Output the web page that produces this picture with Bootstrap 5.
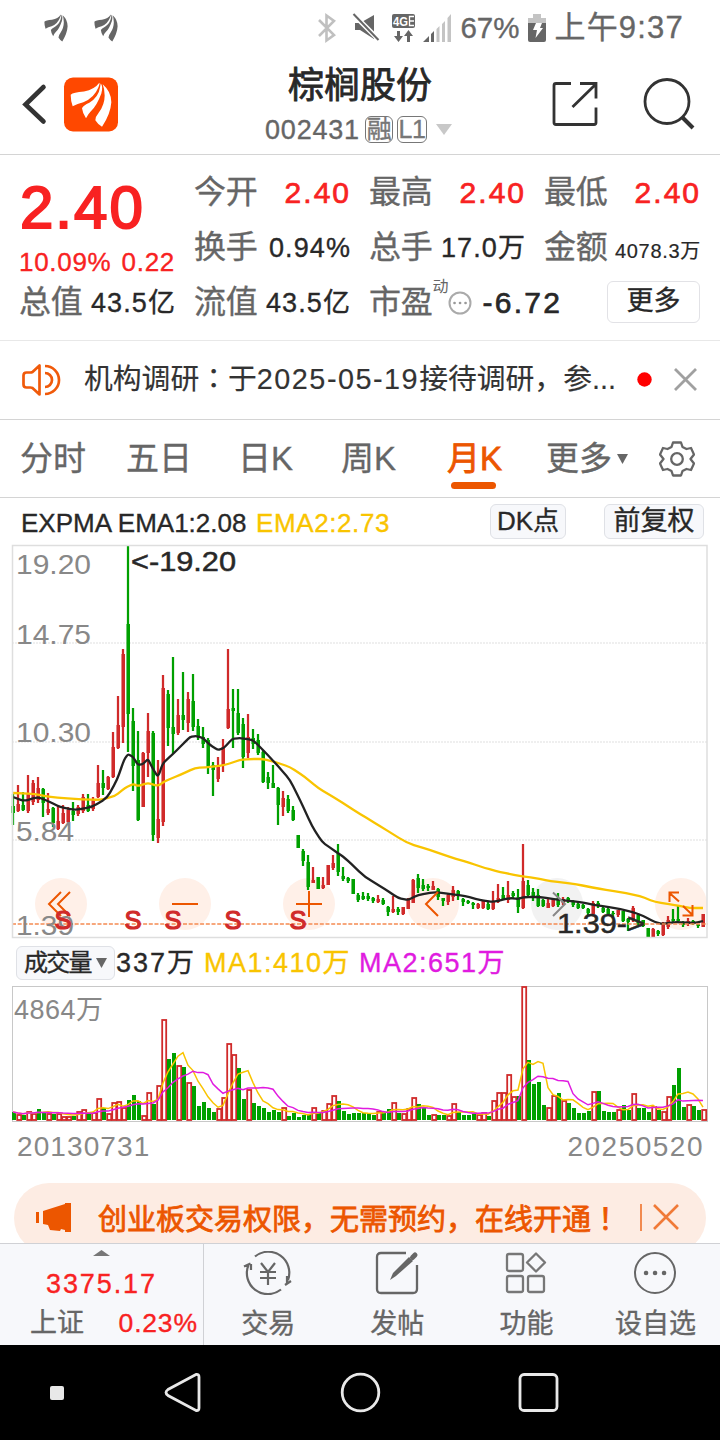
<!DOCTYPE html>
<html lang="zh-CN">
<head>
<meta charset="utf-8">
<meta name="viewport" content="width=device-width, initial-scale=1">
<title>棕榈股份 002431</title>
<link href="https://cdn.jsdelivr.net/npm/bootstrap@5.3.0/dist/css/bootstrap.min.css" rel="stylesheet">
<style>
:root{--ink:#282828;--ash:#666;--up:#f82222;--brand:#ec5600;--line:#d4d4d4}
body{width:720px;height:1440px;overflow:hidden;background:#fff;color:var(--ink);font-family:"Liberation Sans","Noto Sans CJK SC",sans-serif;line-height:1;-webkit-text-stroke:.35px currentColor}
svg{display:block;flex:none}
.nw{white-space:nowrap}
.mid-punct{font-family:"Noto Sans CJK TC",sans-serif}
.statusbar{height:55px;color:var(--ash)}
.titlebar{height:100px;border-bottom:1px solid var(--line)}
.tagbox{border:1.5px solid #777;border-radius:6px;height:27px;font-size:25px;line-height:25px;letter-spacing:-.5px}
.quote{height:186px;padding:9px 20px 0 19px;border-bottom:1px solid #e8e8e8;display:grid;grid-template-columns:repeat(4,1fr);grid-template-rows:repeat(3,55px);column-gap:19px}
.price-cell{grid-row:span 2}
.price{font-size:60px;letter-spacing:2px;font-weight:400;-webkit-text-stroke:2px currentColor}
.lbl{font-size:32px;color:var(--ash);letter-spacing:-.3px}
.val{font-size:27px;letter-spacing:1.1px;margin-right:-1px;padding-top:3px}
.val-lg{font-size:30px;letter-spacing:2px;-webkit-text-stroke:.7px currentColor}
.val-sm{font-size:20px;letter-spacing:.7px;padding-top:9px;-webkit-text-stroke:.2px currentColor}
.up{color:var(--up)}
.more-btn{width:93px;height:42px;border:1.5px solid #e2e2e6;border-radius:6px;font-size:27px;background:#fff}
.news{height:79px;border-bottom:1px solid var(--line);padding-left:21px}
.news-text{font-size:28.8px;color:#333;-webkit-text-stroke:.15px currentColor}
.news-text i{font-style:normal;letter-spacing:1.5px}
.tabs{height:78px;border-bottom:1px solid var(--line);padding-left:20px;font-size:33px;color:var(--ash)}
.tabs .on{color:var(--brand);-webkit-text-stroke:.8px currentColor}
.tabs .on::after{content:"";position:absolute;left:4px;bottom:-12px;width:45px;height:7px;border-radius:4px;background:var(--brand)}
.ind{height:47px;font-size:26px}
.chip{background:#f7f8fb;border:1.5px solid #dfe1e6;border-radius:6px}
.gold{color:#f9c400}.mag{color:#e01be0}
.volhead{height:48px;font-size:27px;padding-left:16px}
.dates{height:50px;padding:0 17px;font-size:28px;color:#888;letter-spacing:1.1px;-webkit-text-stroke:0}
.promo-wrap{height:71px;padding:11px 14px 0;overflow:hidden}
.promo{height:70px;border-radius:35px;background:#fdece3;color:var(--brand)}
.dock{height:102px;background:#f7f8fb;border-top:1px solid #d0d1d5;color:var(--ash)}
.idx{width:204px;border-right:1px solid #d0d1d5}
.dock-item{width:129.25px;font-size:27px}
.sysnav{height:95px;background:#000}
svg text{font-family:"Liberation Sans","Noto Sans CJK SC",sans-serif}
</style>
</head>
<body>
<svg width="0" height="0" class="position-absolute"><defs><g id="feather">
<path d="M20 52Q28 44 60 42Q92 36 106 16Q108 18 103 30Q90 62 58 74Q40 78 26 86Q20 70 20 52Z"/>
<path d="M110 18Q118 26 112 48Q98 86 80 102Q72 110 66 122Q56 108 54 92Q58 84 76 76Q104 58 108 30Z"/>
<path d="M116 20Q142 42 142 74Q140 108 114 148Q100 138 94 128Q94 118 104 106Q122 82 122 54Q122 34 116 20Z"/></g></defs></svg>

<div class="statusbar d-flex align-items-center nw">
  <svg width="24" height="28" viewBox="18 14 126 136" preserveAspectRatio="none" fill="#666" style="margin-left:44px"><use href="#feather"/></svg>
  <svg width="24" height="28" viewBox="18 14 126 136" preserveAspectRatio="none" fill="#666" style="margin-left:26px"><use href="#feather"/></svg>
  <svg class="ms-auto" width="145" height="34" viewBox="316 10 145 34">
    <path d="M320 19L335 34L327.500 39.500V14.500L335 20L320 35" fill="none" stroke="#c0c0c0" stroke-width="2.600"/>
    <path d="M356 22h5l14-8v24l-14-9h-5z" fill="#666"/><path d="M354 13l26 26" stroke="#fff" stroke-width="5"/><path d="M354.500 13l25 26" stroke="#666" stroke-width="2"/>
    <rect x="393" y="13" width="23" height="14" rx="2" fill="#666"/><text x="394" y="24.500" font-size="12" font-weight="700" fill="#fff" textLength="15" lengthAdjust="spacingAndGlyphs">4G</text><path d="M415 15.500h-4.500v9h4.500M410.500 20h4.500" stroke="#fff" stroke-width="1.300" fill="none"/>
    <path d="M398 30h3v5h3l-4.500 6l-4.500-6h3zM408 41h3v-6h3l-4.500-6l-4.500 6h3z" fill="#666"/>
    <path d="M424 41L430 35V41z M432 33l3-3v11h-3z" fill="#666"/><path d="M437.500 28l3-3v16h-3zM443 23l3-3v21h-3zM448.500 17l3.500-4v28h-3.500z" fill="#c4c4c4"/>
  </svg>
  <span style="font-size:29.500px;letter-spacing:0">67%</span>
  <svg width="18" height="28" viewBox="0 0 18 28" style="margin-left:9px"><path d="M0 4h5V0h8v4h5v6H0z" fill="#c4c4c4"/><path d="M0 9h18v17q0 2-2 2H2q-2 0-2-2z" fill="#666"/><path d="M8 9h6l-2 5h3L7.500 24l1.500-8H5z" fill="#fff"/></svg>
  <span style="font-size:31px;margin:0 36px 0 8px;letter-spacing:1.200px">上午9:37</span>
</div>

<header class="titlebar d-flex">
  <svg width="180" height="99" viewBox="0 55 180 99"><path d="M43.500 87L25.500 104.500L43.500 121.500" fill="none" stroke="#333" stroke-width="4.600" stroke-linecap="round"/><rect x="64" y="77.500" width="54" height="54" rx="9" fill="#ff4800"/><svg x="64" y="77.500" width="54" height="54" viewBox="0 0 162 162" fill="#fff"><use href="#feather"/></svg></svg>
  <div class="flex-grow-1 d-flex flex-column align-items-center nw">
    <div style="font-size:36px;line-height:40px;margin-top:11px;-webkit-text-stroke:.8px">棕榈股份</div>
    <div class="d-flex align-items-center" style="height:28px;margin-top:9px;margin-right:3px">
      <span style="font-size:27px;color:#666;letter-spacing:.8px;padding-top:2px;width:100px">002431</span>
      <span class="tagbox text-center" style="width:28px;color:#777">融</span><span class="tagbox text-center" style="width:30px;margin-left:4px;color:#777">L1</span>
      <svg width="16" height="11" viewBox="0 0 16 11" style="margin-left:9px"><path d="M0 0h16L8 11z" fill="#c8c8c8"/></svg>
    </div>
  </div>
  <svg width="180" height="99" viewBox="540 55 180 99"><g fill="none" stroke="#333" stroke-width="2.800"><path d="M571 83.500h-15q-2 0-2 2v37q0 2 2 2h38q2 0 2-2v-15M580 83.500h16v15M596 84L572.500 107"/><circle cx="667" cy="101.500" r="22"/><path d="M682.500 117.500l10.500 10.500" stroke-width="4"/></g></svg>
</header>

<section class="quote nw">
  <div class="price-cell up">
    <div class="price" style="margin-top:14px;margin-left:1px">2.40</div>
    <div class="d-flex justify-content-between" style="font-size:26px;margin:11px 0 0 0;letter-spacing:.7px"><span>10.09%</span><span>0.22</span></div>
  </div>
  <div class="d-flex justify-content-between align-items-center"><span class="lbl">今开</span><span class="val val-lg up">2.40</span></div>
  <div class="d-flex justify-content-between align-items-center"><span class="lbl">最高</span><span class="val val-lg up">2.40</span></div>
  <div class="d-flex justify-content-between align-items-center"><span class="lbl">最低</span><span class="val val-lg up">2.40</span></div>
  <div class="d-flex justify-content-between align-items-center"><span class="lbl">换手</span><span class="val">0.94%</span></div>
  <div class="d-flex justify-content-between align-items-center"><span class="lbl">总手</span><span class="val">17.0万</span></div>
  <div class="d-flex justify-content-between align-items-center"><span class="lbl">金额</span><span class="val val-sm">4078.3万</span></div>
  <div class="d-flex justify-content-between align-items-center"><span class="lbl">总值</span><span class="val">43.5亿</span></div>
  <div class="d-flex justify-content-between align-items-center"><span class="lbl">流值</span><span class="val">43.5亿</span></div>
  <div class="d-flex align-items-center" style="grid-column:span 2"><span class="lbl">市盈</span><span class="align-self-start" style="font-size:16px;color:#666;padding-top:5px;-webkit-text-stroke:0">动</span>
    <svg width="24" height="24" viewBox="0 0 24 24" style="margin-top:2px"><circle cx="12" cy="12" r="10.500" fill="none" stroke="#aaa" stroke-width="2"/><path d="M6.500 12h.1M12 12h.1M17.500 12h.1" stroke="#999" stroke-width="2.600" stroke-linecap="round"/></svg>
    <span class="val val-lg" style="margin-left:10px;letter-spacing:2.300px">-6.72</span><span class="more-btn ms-auto d-flex align-items-center justify-content-center">更多</span></div>
</section>

<section class="news d-flex align-items-center nw">
  <svg width="40" height="32" viewBox="0 0 40 32" fill="none" stroke="#f05a0a" stroke-width="2.700" stroke-linejoin="round"><path d="M18.500 1.500v29l-7-6.500q-1-.5-2-.5h-4q-3 0-3-3v-9q0-3 3-3h4q1 0 2-.5zM24 2a14 14 0 0 1 0 28M24 9a7 7 0 0 1 0 14"/></svg>
  <span class="news-text" style="margin:-3px 0 0 23px;width:535px">机构调研<span class="mid-punct" lang="zh-TW">：</span>于<i>2025-05-19</i>接待调研，参...</span>
  <svg width="15" height="15" style="margin:-1px 0 0 18px"><circle cx="7.500" cy="7.500" r="7.200" fill="red"/></svg>
  <svg width="23" height="23" style="margin:-1px 0 0 22px"><path d="M1 1l21 21M22 1L1 22" stroke="#a0a0a0" stroke-width="2.800"/></svg>
</section>

<nav class="tabs d-flex align-items-center nw">
  <span style="width:106px">分时</span><span style="width:112px">五日</span><span style="width:103px">日K</span><span style="width:106px">周K</span><span style="width:99px"><b class="on position-relative fw-normal">月K</b></span>
  <span class="d-flex align-items-center" style="width:113px">更多<svg width="12" height="10" style="margin-left:5px"><path d="M0 0h11L5.500 10z" fill="#666"/></svg></span>
  <svg width="36" height="36" viewBox="-18 -18 36 36" fill="none" stroke="#666" stroke-width="2.300"><path d="M-4-16.500H4L5.500-12L9.500-10L14-11L17-4.500L13.500 0L17 4.500L14 11L9.500 10L5.500 12L4 16.500H-4L-5.500 12L-9.500 10L-14 11L-17 4.500L-13.500 0L-17-4.500L-14-11L-9.500-10L-5.500-12Z" stroke-linejoin="round"/><circle r="5.800"/></svg>
</nav>

<div class="ind d-flex align-items-center nw">
  <span style="margin:2px 0 0 21px;width:235px">EXPMA EMA1:2.08</span><span class="gold" style="width:234px;letter-spacing:.6px;margin-top:2px">EMA2:2.73</span>
  <span class="chip d-flex align-items-center justify-content-center" style="width:76px;height:35px;margin-bottom:1px">DK点</span>
  <span class="chip d-flex align-items-center justify-content-center" style="width:100px;height:35px;margin:0 0 1px 38px;font-size:27px">前复权</span>
</div>

<svg id="kline" width="696" height="393" viewBox="12 545 696 393" style="margin-left:12px" overflow="visible"></svg>

<div class="volhead d-flex align-items-center nw">
  <span class="chip d-flex align-items-center" style="width:99px;height:34px;padding-left:7px;font-size:24px;letter-spacing:-1.800px;margin-top:1px">成交量<svg width="11" height="10" style="margin-left:5px"><path d="M0 0h11L5.500 10z" fill="#666"/></svg></span>
  <span style="margin:2px 0 0 1px;width:88px;letter-spacing:2px">337万</span><span class="gold" style="width:155px;letter-spacing:1.500px;margin-top:2px">MA1:410万</span><span class="mag" style="letter-spacing:1.500px;margin-top:2px">MA2:651万</span>
</div>

<svg id="volume" width="696" height="136" viewBox="12 986 696 136" style="margin-left:12px"></svg>

<div class="dates d-flex justify-content-between align-items-center"><span>20130731</span><span style="margin-right:-1px;letter-spacing:1.500px">20250520</span></div>

<div class="promo-wrap"><div class="promo d-flex nw" style="padding-left:22px">
  <svg width="37" height="30" viewBox="0 0 37 30" fill="#ec5600" style="margin-top:19px"><path d="M0 10h3v11H0zM7 9L29 2V1h6v29h-6v-2l-4-1l-1 2l-10-1l-2-5l-5-1z"/></svg>
  <span style="font-size:29px;line-height:32px;margin:18px 0 0 25px;width:542px;-webkit-text-stroke:.8px">创业板交易权限，无需预约，在线开通<span class="mid-punct" lang="zh-TW">！</span></span>
  <svg width="40" height="30" viewBox="0 0 40 30" style="margin-top:19px"><path d="M1 2v27" stroke="#ec5600" stroke-width="1.300"/><path d="M14 3l24 24M38 3L14 27" stroke="#f07a38" stroke-width="2.600"/></svg>
</div></div>

<div class="dock d-flex nw">
  <div class="idx up" style="padding:6px 6px 0 30px"><svg width="17" height="6" style="margin-left:63px"><path d="M0 6h17L8.500 0z" fill="#777"/></svg>
    <div style="font-size:27px;letter-spacing:1.900px;margin:15px 0 0 16px">3375.17</div>
    <div class="d-flex justify-content-between align-items-center" style="font-size:27px;margin-top:12px"><span style="color:#666">上证</span><span style="font-size:26.500px;letter-spacing:.800px;margin-right:-1px">0.23%</span></div></div>
  <div class="dock-item d-flex flex-column align-items-center"><svg width="50" height="44" viewBox="0 0 50 44" style="margin-top:7px" fill="none" stroke="#666" stroke-width="2.200"><path d="M12 5.500A21 21 0 0 1 45 29M38 38.500A21 21 0 0 1 5.500 14M1 15.500l6.500-3M8 13v6M42 34l6-4M44 32v-7M18 12l7 9l7-9M25 21v13M17 21h16M17 27h16"/></svg><span style="margin-top:16px">交易</span></div>
  <div class="dock-item d-flex flex-column align-items-center"><svg width="44" height="44" viewBox="0 0 44 44" style="margin-top:7px" fill="none" stroke="#666" stroke-width="2.300"><path d="M31 2H6Q2 2 2 6v32q0 4 4 4h32q4 0 4-4V14"/><path d="M15 29L18 22L34 6L38 10L21 25Z" fill="#666" stroke="none"/><path d="M37.500 6.500L40 4" stroke-width="5" stroke-linecap="round"/></svg><span style="margin-top:16px">发帖</span></div>
  <div class="dock-item d-flex flex-column align-items-center"><svg width="42" height="42" viewBox="0 0 42 42" style="margin-top:8px" fill="none" stroke="#777" stroke-width="2.300"><rect x="2" y="2" width="16" height="17" rx="2"/><rect x="2" y="24" width="16" height="16" rx="2"/><rect x="23" y="24" width="16" height="16" rx="2"/><path d="M31 1.500L40 10.500L31 19.500L22 10.500Z" stroke-linejoin="round"/></svg><span style="margin-top:17px">功能</span></div>
  <div class="dock-item d-flex flex-column align-items-center"><svg width="44" height="44" viewBox="0 0 44 44" style="margin-top:7px" fill="none" stroke="#666" stroke-width="2"><circle cx="22" cy="22" r="20"/><path d="M13 22h.1M22 22h.1M31 22h.1" stroke-width="4.500" stroke-linecap="round"/></svg><span style="margin-top:16px">设自选</span></div>
</div>

<div class="sysnav"><svg width="720" height="95" viewBox="0 1345 720 95" fill="none" stroke="#e8e8e8" stroke-width="2.800"><rect x="50" y="1386" width="14" height="14" rx="2" fill="#e8e8e8" stroke="none"/><path d="M196 1374.500L168 1389.500Q164 1392.500 168 1395.500L196 1410.500Q199 1411 199 1408V1377Q199 1374 196 1374.500Z"/><circle cx="360.500" cy="1392.500" r="18.300"/><rect x="520" y="1374.500" width="37" height="36" rx="4"/></svg></div>

<script src="https://cdn.jsdelivr.net/npm/bootstrap@5.3.0/dist/js/bootstrap.bundle.min.js"></script>
<script>
const RED = '#d02a2a', GREEN = '#00a000';
/* one month per entry: direction, high, low, then body top and bottom (chart units) */
const months = `G794,825,806,813 R785,812,804,811 G792,811,805,810 R775,813,793,811 R780,805,783,802 R777,803,788,800 G788,817,789,803 R793,815,809,813 G807,827,808,823 R805,830,821,829 R805,824,813,823 R807,823,810,822 G802,821,811,815 R805,816,807,814 R794,813,797,811 G794,812,805,811 R797,811,800,809 R765,798,783,797 G770,795,783,788 R776,790,777,789 R732,778,747,777 R696,749,725,748 R649,743,654,727 G545,752,624,714 G708,791,721,766 G731,821,760,820 R752,807,753,807 R713,777,731,753 G731,841,733,835 R760,843,819,838 R675,826,688,822 G690,746,694,728 G657,754,727,734 R699,735,715,733 G672,730,715,720 R692,732,699,723 G674,731,701,727 G719,740,726,737 G727,748,737,744 G738,774,740,767 G762,796,765,770 R757,782,767,779 R739,772,747,765 R649,729,709,728 G689,748,708,711 G689,735,713,733 G718,768,724,757 R714,758,737,753 G729,749,738,744 G734,755,740,753 G750,783,752,782 G772,789,777,783 G765,788,783,788 G787,825,788,805 R791,816,798,807 G795,813,799,811 G806,821,810,820 G835,848,835,848 G849,866,851,861 G855,890,862,887 R867,883,880,883 G877,889,877,889 R877,889,885,888 R865,885,865,885 R855,870,863,868 G844,876,853,872 G867,881,876,879 G877,883,878,881 G879,894,879,894 G893,902,895,900 G892,900,896,899 G893,901,896,899 G897,903,898,901 R895,903,899,902 G898,905,900,904 G906,916,907,912 R896,913,909,912 G907,915,909,912 R907,915,907,914 R898,909,899,909 R879,903,880,903 G874,893,878,888 G879,891,885,889 G884,891,886,888 R881,890,886,890 G888,900,889,897 G898,906,898,901 R894,905,895,902 R886,901,890,897 G890,900,891,895 G898,906,899,902 G900,904,901,903 G902,909,903,905 R903,909,904,908 R900,909,901,908 G901,910,904,909 R891,910,902,909 R884,903,898,902 G887,900,895,899 R881,903,895,900 G891,899,893,896 G889,913,897,907 R844,909,881,908 G880,898,885,895 G888,901,892,898 G889,907,895,906 G899,907,900,906 R899,908,903,908 R898,907,899,906 G893,907,898,905 R897,905,899,903 G897,903,898,901 G900,907,902,905 G903,909,904,908 G904,909,905,908 G908,915,909,913 R901,915,903,914 G901,908,903,905 G907,913,908,912 G908,915,909,914 G911,917,913,914 R910,917,910,915 G911,922,911,921 G918,931,919,922 R906,922,908,920 G913,925,915,924 G920,927,920,926 G928,938,928,937 R928,937,929,937 G930,936,931,934 R922,936,924,935 R916,929,920,927 G909,922,919,921 G905,922,919,921 G921,927,922,925 R918,926,921,924 G920,925,921,923 G924,928,924,926 R914,927,914,927`.split(' ');
const ema1 = [13,797,24,801,38,797,50,802,60,807,75,810,92,807,107,798,117,780,124,760,128,754,133,757,138,765,143,764,148,759,153,769,158,777,163,763,173,754,183,744,190,737,196,736,203,738,210,745,218,750,224,748,232,739,240,738,253,740,263,750,278,766,290,780,300,800,312,826,322,842,332,849,345,858,365,877,385,889,398,898,408,900,418,895,435,892,450,894,465,896,480,900,493,902,510,898,518,899,524,897,540,897,560,900,580,902,595,905,615,908,633,912,643,916,655,922,662,924,675,922,695,923,703,921];
const ema2 = [13,793,35,794,50,797,75,799,100,800,115,796,125,788,133,784,138,786,148,783,158,786,165,781,180,775,195,768,210,767,225,765,240,760,250,759,263,759,275,762,290,767,305,777,318,788,335,798,360,814,380,826,407,843,430,850,450,857,470,863,485,868,500,872,520,876,535,878,550,881,575,884,600,889,620,892,640,896,655,902,675,905,690,908,703,908];

/* curve with corners softened around each given point */
function curve(p) {
  let d = `M${p[0]} ${p[1]}`;
  for (let i = 2; i < p.length - 2; i += 2) {
    const f = .3, x = p[i], y = p[i+1];
    d += `L${x+(p[i-2]-x)*f} ${y+(p[i-1]-y)*f}Q${x} ${y} ${x+(p[i+2]-x)*f} ${y+(p[i+3]-y)*f}`;
  }
  return d + `L${p[p.length-2]} ${p[p.length-1]}`;
}
let k = '<path d="M12 643H708M12 742H708M12 840H708" stroke="#efefef" stroke-width="2" stroke-dasharray="2 1"/>';
[[61,'#fff0e8'],[185,'#fff0e8'],[309,'#fff0e8'],[433,'#fff0e8'],[557,'#f2f2f2'],[681,'#fff0e8']].forEach(c => k += `<circle cx="${c[0]}" cy="904" r="26" fill="${c[1]}"/>`);
months.forEach((m, i) => {
  const x = 13 + 5*i, c = m[0] === 'R' ? RED : GREEN, [h,l,t,b] = m.slice(1).split(',').map(Number);
  k += `<path d="M${x-1} ${h}h2V${l}h-2z" fill="${c}"/><path d="M${x-1.500} ${h}h3V${l}h-3z" fill="${c}" opacity=".25"/><path d="M${x-1.500} ${t}h3.500V${b}h-3.500z" fill="${c}"/>`;
});
k += `<path d="${curve(ema2)}" fill="none" stroke="#f9c400" stroke-width="2.300"/><path d="${curve(ema1)}" fill="none" stroke="#222" stroke-width="2.300"/>`;
k += '<path d="M12 924H708" stroke="#f58a52" stroke-width="1.500" stroke-dasharray="4 1.700"/>';
k += '<g fill="none" stroke="#ec5600" stroke-width="2"><path d="M61 892L49 904L61 916M70 892L58 904L70 916M172 904h26M296 904h26M309 891v26M438 892L426 904L438 916M669.500 902V892.500H679M669.500 893L679 901.500M683 906L692.500 915M692.500 905V915.500H682.500"/></g><path d="M553 892.500L565 904L553 916" fill="none" stroke="#888" stroke-width="2"/>';
[[16,574,'19.20',75],[16,644,'14.75',75],[16,742,'10.30',75],[16,841,'5.84',58],[16,935,'1.39',58]].forEach(a => k += `<text x="${a[0]}" y="${a[1]}" font-size="28" fill="#888" textLength="${a[3]}" lengthAdjust="spacingAndGlyphs">${a[2]}</text>`);
[63,133,173,233,298].forEach(x => k += `<text x="${x}" y="929" text-anchor="middle" font-size="25.500" fill="#d02a2a" stroke="#d02a2a" stroke-width="1.200">S</text>`);
k += '<g font-size="27" fill="#282828" stroke="#282828" stroke-width=".5"><text x="131" y="571" textLength="105" lengthAdjust="spacingAndGlyphs">&lt;-19.20</text><text x="557" y="933" font-size="28" textLength="88" lengthAdjust="spacingAndGlyphs">1.39-&gt;</text></g>';
k += '<rect x="12.500" y="545.500" width="694.500" height="392" fill="none" stroke="#dedede" stroke-width="1.500"/>';
document.getElementById('kline').innerHTML = k;

/* monthly volume and rising months */
const vol = [8,6,5,9,7,11,7,7,6,7,4,4,4,9,11,8,8,22,12,7,18,19,13,20,25,19,5,28,16,35,101,61,67,55,53,38,34,14,18,12,8,12,23,77,66,52,21,31,17,14,12,8,10,8,13,4,7,3,5,6,13,7,10,17,25,19,9,6,7,7,7,7,5,9,8,11,18,7,7,12,23,16,13,5,6,5,5,5,17,8,5,5,6,6,8,4,20,28,28,46,24,24,134,60,36,38,15,13,25,27,20,17,12,7,7,9,29,29,9,8,8,11,15,10,27,12,12,8,14,10,9,24,35,52,13,16,14,10,11];
const volUp = new Set([1,3,4,7,9,10,11,13,14,16,17,19,20,21,22,26,27,29,30,33,35,41,42,43,44,47,54,60,62,63,64,73,76,78,79,80,84,87,88,93,94,96,97,98,99,100,102,107,108,110,116,121,124,128,130,131,135,138]);
const avg = n => vol.map((_, i) => { const s = vol.slice(Math.max(0, i-n+1), i+1); return `${13+5*i},${1120 - s.reduce((a,b) => a+b)/s.length}`; }).join(' ');
let v = '<rect x="12.500" y="986.500" width="695" height="135" fill="#fff" stroke="#c8c8c8"/>';
vol.forEach((h, i) => {
  const x = 12 + 5*i;
  v += volUp.has(i) ? `<rect x="${x+.2}" y="${1121-h}" width="4" height="${h-1}" fill="#fff" stroke="${RED}" stroke-width="1.800"/>` : `<rect x="${x}" y="${1120-h}" width="4" height="${h}" fill="${GREEN}"/>`;
});
v += `<polyline points="${avg(5)}" fill="none" stroke="#f9c400" stroke-width="1.500"/><polyline points="${avg(10)}" fill="none" stroke="#e01be0" stroke-width="1.500"/>`;
v += '<text x="14" y="1019" font-size="27" fill="#888" textLength="89">4864万</text>';
document.getElementById('volume').innerHTML = v;
</script>
</body>
</html>
